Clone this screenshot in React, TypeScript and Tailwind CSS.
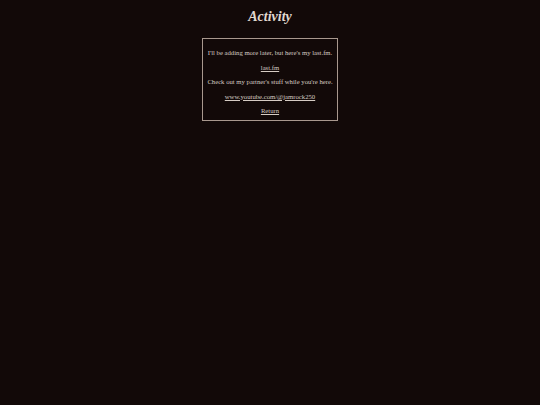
import React from "react";

const App: React.FC = () => {
	return (
		<div className="min-h-[405px] w-full bg-[#120908] text-[#d6ccc4] flex flex-col items-center [font-family:'Liberation_Serif',serif]">
			<h1 className="mt-[9px] text-[14px] leading-[16px] font-bold italic text-[#e0d8d0]">
				Activity
			</h1>
			<div className="mt-[13px] border border-[#a8988e] px-[4px] pt-[7px] pb-[1px] flex flex-col items-center text-[6.7px] leading-[14.6px]">
				<p>I'll be adding more later, but here's my last.fm.</p>
				<a className="underline" href="#">
					last.fm
				</a>
				<p>Check out my partner's stuff while you're here.</p>
				<a className="underline" href="#">
					www.youtube.com/@jamrock250
				</a>
				<a className="underline" href="#">
					Return
				</a>
			</div>
		</div>
	);
};

export default App;
